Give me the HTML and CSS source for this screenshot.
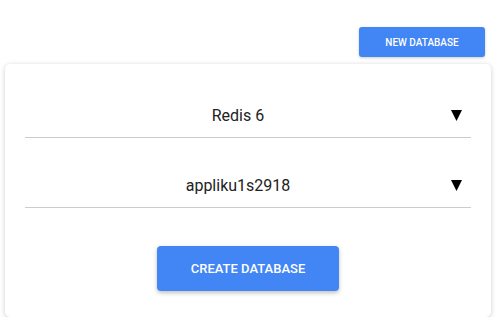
FILE: index.html
```html
<!DOCTYPE html>
<html>
<head>
<meta charset="utf-8">
<link rel="stylesheet" href="styles.css">
</head>
<body>
<div class="toolbar">
  <button class="btn btn-small">NEW DATABASE</button>
</div>
<div class="card">
  <div class="select">
    <span class="select-value">Redis 6</span>
    <svg class="arrow" width="11" height="11" viewBox="0 0 11 11"><polygon points="0,0 11,0 5.5,11" fill="#000"/></svg>
  </div>
  <div class="select">
    <span class="select-value">appliku1s2918</span>
    <svg class="arrow" width="11" height="11" viewBox="0 0 11 11"><polygon points="0,0 11,0 5.5,11" fill="#000"/></svg>
  </div>
  <div class="actions">
    <button class="btn btn-large">CREATE DATABASE</button>
  </div>
</div>
</body>
</html>
```
FILE: styles.css
```css
* { box-sizing: border-box; }
body {
  margin: 0;
  background: #fff;
  font-family: Roboto, "Noto Sans", sans-serif;
}
.toolbar {
  display: flex;
  justify-content: flex-end;
  padding: 27px 19px 0 0;
}
.btn {
  border: none;
  background: #4285f4;
  color: #fff;
  font-family: Roboto, sans-serif;
  font-weight: 500;
  cursor: pointer;
}
.btn-small {
  width: 126px;
  height: 30px;
  font-size: 10px;
  border-radius: 3px;
  box-shadow: 0 1px 3px rgba(0,0,0,0.2);
}
.card {
  margin: 7px 13px 0 5px;
  background: #fff;
  border-radius: 5px;
  box-shadow: 0 1px 5px rgba(0,0,0,0.2);
  padding: 30px 20px 26px 20px;
  display: flex;
  flex-direction: column;
  gap: 26px;
}
.select {
  height: 44px;
  display: flex;
  align-items: center;
  border-bottom: 1px solid #cccccc;
  padding-right: 9px;
}
.select-value {
  flex: 1;
  text-align: center;
  font-size: 16px;
  color: #222;
}
.arrow { display: block; margin-top: -1px; }
.actions {
  display: flex;
  justify-content: center;
  padding-top: 12px;
}
.btn-large {
  width: 182px;
  height: 45px;
  font-size: 13px;
  border-radius: 4px;
  box-shadow: 0 2px 4px rgba(0,0,0,0.25);
}
```
